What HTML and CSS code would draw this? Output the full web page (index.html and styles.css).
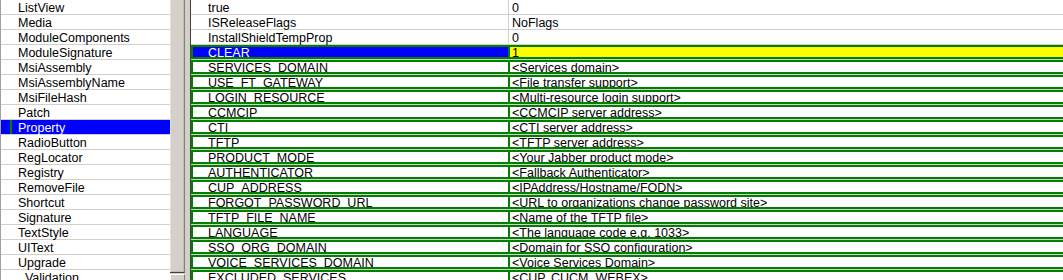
FILE: index.html
```html
<!DOCTYPE html>
<html lang="en">
<head>
    <meta charset="UTF-8">
    <title>Property Table</title>
    <link rel="stylesheet" href="styles.css">
</head>
<body>
    <div class="frame">
        <div class="tables">
            <div class="item">ListView</div>
            <div class="item">Media</div>
            <div class="item">ModuleComponents</div>
            <div class="item">ModuleSignature</div>
            <div class="item">MsiAssembly</div>
            <div class="item">MsiAssemblyName</div>
            <div class="item">MsiFileHash</div>
            <div class="item">Patch</div>
            <div class="item selected">Property</div>
            <div class="item">RadioButton</div>
            <div class="item">RegLocator</div>
            <div class="item">Registry</div>
            <div class="item">RemoveFile</div>
            <div class="item">Shortcut</div>
            <div class="item">Signature</div>
            <div class="item">TextStyle</div>
            <div class="item">UIText</div>
            <div class="item">Upgrade</div>
            <div class="item">_Validation</div>
        </div>
        <div class="vscroll">
            <div class="thumb"></div>
            <div class="arrow"></div>
        </div>
        <div class="splitter"></div>
        <div class="grid">
            <div class="row"><div class="cell c1"><span>true</span></div><div class="cell c2"><span>0</span></div></div>
            <div class="row"><div class="cell c1"><span>ISReleaseFlags</span></div><div class="cell c2"><span>NoFlags</span></div></div>
            <div class="row"><div class="cell c1"><span>InstallShieldTempProp</span></div><div class="cell c2"><span>0</span></div></div>
            <div class="row hl current"><div class="cell c1"><span>CLEAR</span></div><div class="cell c2"><span>1</span></div></div>
            <div class="row hl"><div class="cell c1"><span>SERVICES_DOMAIN</span></div><div class="cell c2"><span>&lt;Services domain&gt;</span></div></div>
            <div class="row hl"><div class="cell c1"><span>USE_FT_GATEWAY</span></div><div class="cell c2"><span>&lt;File transfer support&gt;</span></div></div>
            <div class="row hl"><div class="cell c1"><span>LOGIN_RESOURCE</span></div><div class="cell c2"><span>&lt;Multi-resource login support&gt;</span></div></div>
            <div class="row hl"><div class="cell c1"><span>CCMCIP</span></div><div class="cell c2"><span>&lt;CCMCIP server address&gt;</span></div></div>
            <div class="row hl"><div class="cell c1"><span>CTI</span></div><div class="cell c2"><span>&lt;CTI server address&gt;</span></div></div>
            <div class="row hl"><div class="cell c1"><span>TFTP</span></div><div class="cell c2"><span>&lt;TFTP server address&gt;</span></div></div>
            <div class="row hl"><div class="cell c1"><span>PRODUCT_MODE</span></div><div class="cell c2"><span>&lt;Your Jabber product mode&gt;</span></div></div>
            <div class="row hl"><div class="cell c1"><span>AUTHENTICATOR</span></div><div class="cell c2"><span>&lt;Fallback Authenticator&gt;</span></div></div>
            <div class="row hl"><div class="cell c1"><span>CUP_ADDRESS</span></div><div class="cell c2"><span>&lt;IPAddress/Hostname/FQDN&gt;</span></div></div>
            <div class="row hl"><div class="cell c1"><span>FORGOT_PASSWORD_URL</span></div><div class="cell c2"><span>&lt;URL to organizations change password site&gt;</span></div></div>
            <div class="row hl"><div class="cell c1"><span>TFTP_FILE_NAME</span></div><div class="cell c2"><span>&lt;Name of the TFTP file&gt;</span></div></div>
            <div class="row hl"><div class="cell c1"><span>LANGUAGE</span></div><div class="cell c2"><span>&lt;The language code e.g. 1033&gt;</span></div></div>
            <div class="row hl"><div class="cell c1"><span>SSO_ORG_DOMAIN</span></div><div class="cell c2"><span>&lt;Domain for SSO configuration&gt;</span></div></div>
            <div class="row hl"><div class="cell c1"><span>VOICE_SERVICES_DOMAIN</span></div><div class="cell c2"><span>&lt;Voice Services Domain&gt;</span></div></div>
            <div class="row hl"><div class="cell c1"><span>EXCLUDED_SERVICES</span></div><div class="cell c2"><span>&lt;CUP, CUCM, WEBEX&gt;</span></div></div>
        </div>
    </div>
</body>
</html>
```

FILE: styles.css
```css
/* Table editor look */
body {
    margin: 0;
    background-color: white;
    font-family: "Liberation Sans", Arial, sans-serif;
    font-size: 12.5px;
    color: #000;
    overflow: hidden;
}

.frame {
    display: flex;
    height: 280px;
    overflow: hidden;
}

/* left list of tables */
.tables {
    width: 169px;
    border-left: 1px solid #a0a0a0;
    flex-shrink: 0;
}

.item {
    height: 13px;
    line-height: 14px;
    padding-top: 1px;
    padding-left: 17px;
    border-bottom: 1px solid #d4d0c8;
    white-space: nowrap;
    position: relative;
}

.item.selected {
    background-color: #0000ff;
    color: white;
}

.item.selected::before {
    content: "";
    position: absolute;
    left: 9px;
    top: 0;
    width: 2px;
    height: 14px;
    background-color: #008000;
}

/* scrollbar and splitter */
.vscroll {
    width: 15px;
    flex-shrink: 0;
    background-color: #d4d0c8;
    display: flex;
    flex-direction: column;
}

.thumb {
    height: 273px;
    box-sizing: border-box;
    border-right: 1px solid #808080;
    border-bottom: 1px solid #404040;
    box-shadow: inset 1px 0 0 #e4e1dc, inset -1px -1px 0 #c0bcb4;
}

.arrow {
    flex: 1;
    margin-top: 1px;
    border-top: 1px solid #ffffff;
    border-left: 1px solid #ffffff;
    border-right: 1px solid #808080;
}

.splitter {
    width: 5px;
    flex-shrink: 0;
    background-color: #d4d0c8;
}

/* property grid */
.grid {
    flex: 1;
    min-width: 0;
    border-left: 1px solid #404040;
    overflow: hidden;
}

.row {
    display: flex;
    height: 15px;
    box-sizing: border-box;
    border-bottom: 1px solid #d4d0c8;
}

.cell {
    box-sizing: border-box;
    height: 14px;
    padding-top: 1px;
    line-height: 14px;
    white-space: nowrap;
}

.cell span {
    display: block;
}

.c1 {
    width: 318px;
    flex-shrink: 0;
    padding-left: 17px;
    border-right: 1px solid #d4d0c8;
}

.c2 {
    flex: 1;
    padding-left: 3px;
    min-width: 920px;
}

.row.hl .cell {
    padding-top: 0;
    border-top: 2px solid #008000;
    border-bottom: 2px solid #008000;
    overflow: hidden;
}

.row.hl .cell span {
    margin-top: -1px;
}

.row.hl .c1 {
    padding-left: 15px;
    border-left: 2px solid #008000;
    border-right: 1px solid #008000;
}

.row.hl .c2 {
    padding-left: 2px;
    border-left: 1px solid #008000;
}

.row.current .c1 {
    background-color: #0000ff;
    color: white;
}

.row.current .c2 {
    background-color: #ffff00;
}
```
